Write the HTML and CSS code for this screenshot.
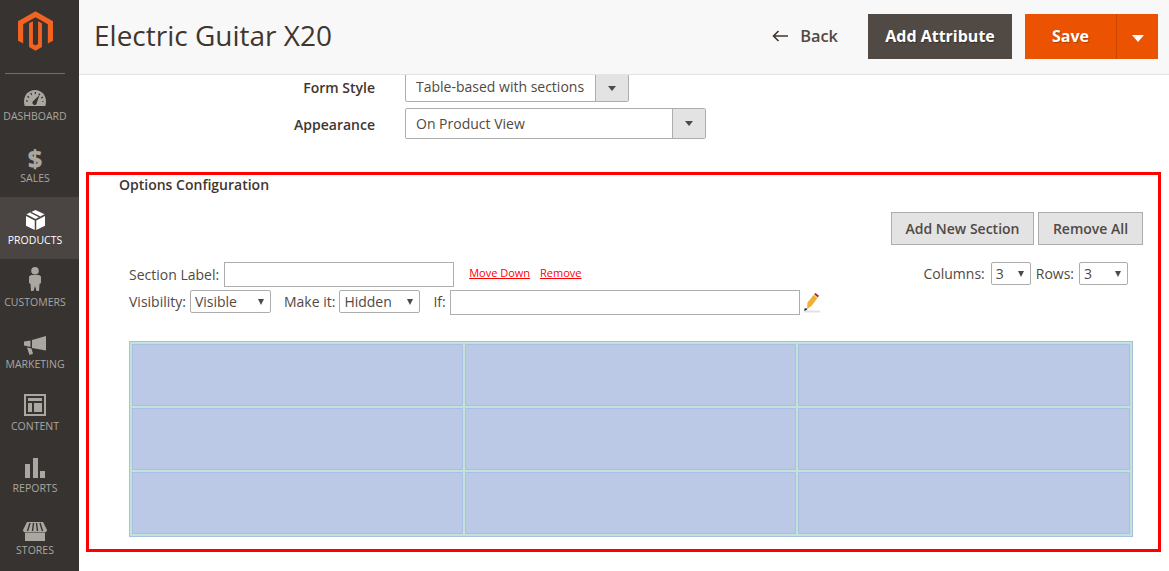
FILE: index.html
```html
<!DOCTYPE html>
<html lang="en">
<head>
<meta charset="utf-8">
<title>Electric Guitar X20</title>
<link rel="stylesheet" href="styles.css">
</head>
<body>
<div class="app">
  <nav class="sidebar">
    <div class="logo">
      <svg width="35" height="40" viewBox="0 0 38 43"><path fill="#f26322" d="M19 0 38 11v21l-5.600 3.200V14.200L19 6.500 5.600 14.200v21L0 32V11z"/><path fill="#f26322" d="M19 43 12 39V13.200l4.200-2.400V35.500l2.800 1.700 2.800-1.700V10.800l4.200 2.400V39z"/></svg>
    </div>
    <a class="nav-item">
      <svg class="nav-icon" width="22" height="16" viewBox="0 0 22 16"><path fill="currentColor" d="M11 0C4.500 0 0 5 0 11.500c0 1.600.2 3.100.7 4.500h20.600c.5-1.400.7-2.900.7-4.500C22 5 17.500 0 11 0z"/><path fill="none" stroke="#373330" stroke-width="2" stroke-dasharray="1.200 3" d="M3 11.500C3 7 6.500 3 11 3s8 4 8 8.500"/><path fill="#373330" d="M15.500 5 12.800 12.800a2.200 2.200 0 1 1-3.500-1.700z"/></svg>
      <span>Dashboard</span>
    </a>
    <a class="nav-item">
      <span class="dollar">$</span>
      <span>Sales</span>
    </a>
    <a class="nav-item active">
      <svg class="nav-icon" width="19" height="20" viewBox="0 0 20 21"><path fill="currentColor" d="M10 0 19.500 4.500 10 9.500.5 4.500z"/><path fill="currentColor" d="M0 6.300 9.200 11v10L0 16.500z"/><path fill="currentColor" d="M20 6.300 10.800 11v10L20 16.500z"/><path stroke="#4a4542" stroke-width="1.500" d="M5 2.500 14.500 7.200"/></svg>
      <span>Products</span>
    </a>
    <a class="nav-item">
      <svg class="nav-icon mb-4" width="12" height="24" viewBox="0 0 12 24"><circle cx="6" cy="3.800" r="3.800" fill="currentColor"/><path fill="currentColor" d="M2 8h8l2 1.500V16l-1.500 1-.5 7H7.500L6 19l-1.500 5H2l-.5-7L0 16V9.500z"/></svg>
      <span>Customers</span>
    </a>
    <a class="nav-item">
      <svg class="nav-icon mb-2" width="22" height="19" viewBox="0 0 22 19"><path fill="currentColor" d="M22 0v14.500L8 12V4z"/><path fill="currentColor" d="M0 5.500 6.500 4.500v6.500L0 9.500z"/><path fill="currentColor" d="M3 11.500 7.500 12.500 9 17.800 5.500 19z"/></svg>
      <span>Marketing</span>
    </a>
    <a class="nav-item">
      <svg class="nav-icon" width="22" height="22" viewBox="0 0 22 22"><path fill="currentColor" fill-rule="evenodd" d="M0 0h22v22H0zM2 2v18h18V2z"/><path fill="currentColor" d="M4 4h14v3H4zM4 9h4v9H4zM10 9h8v9h-8z"/></svg>
      <span>Content</span>
    </a>
    <a class="nav-item">
      <svg class="nav-icon" width="20" height="20" viewBox="0 0 20 20"><path fill="currentColor" d="M0 6h5v14H0zM8 0h5v20H8zM15 13h5v7h-5z"/></svg>
      <span>Reports</span>
    </a>
    <a class="nav-item">
      <svg class="nav-icon mb-2" width="24" height="19" viewBox="0 0 24 19"><path fill="currentColor" d="M4 0h16l4 8c0 1.500-1.200 2.500-2.500 2.500H2.500C1.200 10.500 0 9.500 0 8z"/><path stroke="#373330" stroke-width="1.400" d="M7 1 4.500 9M10.500 1 9.500 9M13.500 1l1 8M17 1l2.500 8"/><path fill="currentColor" d="M2 11h20v8H2z"/></svg>
      <span>Stores</span>
    </a>
  </nav>
  <div class="main">
    <header class="topbar">
      <h1 class="page-title">Electric Guitar X20</h1>
      <div class="actions">
        <a class="back">
          <svg width="16" height="12" viewBox="0 0 16 12"><path fill="none" stroke="#41362f" stroke-width="1.600" d="M16 6H1.500M6.500 1 1.500 6l5 5"/></svg>
          <span>Back</span>
        </a>
        <button class="btn-dark">Add Attribute</button>
        <div class="save">
          <span class="save-label">Save</span>
          <span class="save-toggle"><i class="save-arrow"></i></span>
        </div>
      </div>
    </header>
    <div class="form">
      <div class="field field-cut">
        <label class="field-label">Form Style</label>
        <div class="fake-select w-short"><span class="fake-value">Table-based with sections</span><span class="fake-btn"><i class="tri"></i></span></div>
      </div>
      <div class="field field-tall">
        <label class="field-label">Appearance</label>
        <div class="fake-select w-long tall"><span class="fake-value">On Product View</span><span class="fake-btn"><i class="tri"></i></span></div>
      </div>
    </div>
    <section class="options">
      <h2 class="options-title">Options Configuration</h2>
      <div class="options-buttons">
        <button class="btn-grey add">Add New Section</button>
        <button class="btn-grey">Remove All</button>
      </div>
      <div class="row-one">
        <label class="lbl">Section Label:</label>
        <input class="text-input label-input" type="text">
        <a class="red-link first">Move Down</a>
        <a class="red-link">Remove</a>
        <div class="grid-controls">
          <label class="lbl cols">Columns:</label>
          <select class="mini w-col"><option>3</option></select>
          <label class="lbl">Rows:</label>
          <select class="mini w-row"><option>3</option></select>
        </div>
      </div>
      <div class="row-two">
        <label class="lbl">Visibility:</label>
        <select class="mini w-vis"><option>Visible</option></select>
        <label class="lbl make">Make it:</label>
        <select class="mini w-vis"><option>Hidden</option></select>
        <label class="lbl iflabel">If:</label>
        <input class="text-input if-input" type="text">
        <svg class="pencil" width="17" height="20" viewBox="0 0 17 20"><path fill="#e2e2e2" d="M1 17.500h16v2H1z"/><path fill="#f0b030" d="M4.500 9.500 10.500 2l4 3-6 8-4.500 3z"/><path fill="#a03030" d="M11 1.200 12.500 0l3.500 2.800-1.200 1.700z"/><path fill="#222" d="M1.500 15.500l2-.2.800 1.200-3 1.500z"/></svg>
      </div>
      <div class="sections">
        <div class="cell"></div><div class="cell"></div><div class="cell"></div>
        <div class="cell"></div><div class="cell"></div><div class="cell"></div>
        <div class="cell"></div><div class="cell"></div><div class="cell"></div>
      </div>
    </section>
  </div>
</div>
</body>
</html>
```
FILE: styles.css
```css
* { box-sizing: border-box; }
html, body { margin: 0; padding: 0; height: 100%; overflow: hidden; background: #fff; }
body { font-family: "Open Sans", sans-serif; color: #41362f; font-size: 14px; }
.app { display: flex; height: 571px; }

.sidebar { width: 79px; flex: none; background: #373330; display: flex; flex-direction: column; }
.logo { height: 74px; margin: 0 14px -1px 5px; border-bottom: 1px solid #736e6a; display: flex; justify-content: center; padding-top: 11px; }
.nav-item { height: 62px; flex: none; display: flex; flex-direction: column; align-items: center; justify-content: flex-end; padding: 0 9px 12px 0; color: #aaa6a0; font-size: 10.5px; line-height: 14px; text-transform: uppercase; }
.nav-item.active { background: #4a4542; color: #fff; }
.nav-icon { display: block; margin-bottom: 3px; }
.nav-icon.mb-2 { margin-bottom: 2px; }
.nav-icon.mb-4 { margin-bottom: 4px; }
.dollar { font-size: 25px; line-height: 26px; font-weight: 800; margin-bottom: 0; }

.main { flex: 1; min-width: 0; display: flex; flex-direction: column; }
.topbar { position: relative; z-index: 1; height: 75px; flex: none; background: #f8f8f8; border-bottom: 1px solid #e3e3e3; display: flex; align-items: flex-start; justify-content: space-between; padding: 13px 11px 0 15px; }
.page-title { margin: 0; font-size: 28px; line-height: 44px; font-weight: 400; color: #41362f; }
.actions { display: flex; align-items: center; margin-top: 1px; }
.back { display: flex; align-items: center; gap: 12px; font-size: 16.4px; font-weight: 600; color: #514943; margin-right: 30px; height: 45px; padding-bottom: 2px; }
.btn-dark { width: 144px; height: 45px; background: #514943; color: #fff; border: 0; font: 700 16px "Open Sans", sans-serif; text-shadow: 1px 1px 1px rgba(0,0,0,.3); margin-right: 13px; padding: 0 0 2px; }
.save { width: 133px; height: 45px; display: flex; background: #eb5202; color: #fff; font-weight: 700; font-size: 16px; text-shadow: 1px 1px 1px rgba(0,0,0,.25); }
.save-label { width: 91px; display: flex; align-items: center; justify-content: center; padding-bottom: 2px; }
.save-toggle { flex: 1; border-left: 1px solid #c74400; display: flex; align-items: center; justify-content: center; }
.save-arrow { width: 0; height: 0; margin-top: 3px; border: 6px solid transparent; border-top: 7px solid #fff; border-bottom: 0; }

.form { display: flex; flex-direction: column; gap: 6px; margin-top: -1px; }
.field { display: flex; align-items: center; gap: 30px; }
.field-label { width: 296px; text-align: right; font-size: 14px; font-weight: 600; color: #41362f; }
.field-cut .field-label { margin-bottom: 2px; }
.field-tall .field-label { margin-top: 2px; }
.fake-select { height: 28px; border: 1px solid #adadad; display: flex; align-items: stretch; background: #fff; border-radius: 2px; }
.fake-select.tall { height: 31px; }
.w-short { width: 224px; }
.w-long { width: 301px; }
.fake-value { flex: 1; padding-left: 10px; font-size: 14px; line-height: 24px; color: #514943; }
.tall .fake-value { line-height: 29px; }
.fake-btn { width: 33px; background: #e3e3e3; border-left: 1px solid #adadad; display: flex; align-items: center; justify-content: center; }
.tri { width: 0; height: 0; border: 4px solid transparent; border-top: 5px solid #514943; border-bottom: 0; }

.options { margin: 33px 0 0 7px; width: 1075px; height: 380px; border: 3px solid #f00; padding: 0 15px 0 30px; }
.options-title { margin: 0; font-size: 14px; line-height: 20px; font-weight: 600; color: #41362f; }
.options-buttons { display: flex; justify-content: flex-end; gap: 4px; margin-top: 17px; }
.btn-grey { height: 33px; width: 105px; background: #e3e3e3; border: 1px solid #adadad; font: 600 14px "Open Sans", sans-serif; color: #514943; padding: 0; }
.btn-grey.add { width: 143px; }

.lbl { font-size: 14px; color: #514943; line-height: 20px; }
.text-input { border: 1px solid #adadad; background: #fff; height: 25px; padding: 0; border-radius: 0; }
.label-input { width: 230px; margin-left: 5px; }
.red-link { font-size: 11px; color: #f00; text-decoration: underline; margin: 0 0 4px 10px; }
.red-link.first { margin-left: 15px; }
.row-one { display: flex; align-items: center; margin: 17px 15px 0 10px; height: 25px; }
.grid-controls { margin: 0 0 2px auto; display: flex; align-items: center; gap: 5px; }
.cols { margin-right: 1px; }
.row-two { display: flex; align-items: center; margin: 3px 0 0 10px; height: 25px; }
.row-two .lbl { margin-bottom: 2px; }
.mini { appearance: none; -webkit-appearance: none; height: 23px; border: 1px solid #adadad; border-radius: 2px; color: #514943; font: 14px "Open Sans", sans-serif; padding: 0 0 0 4px; margin-left: 4px; background: #fff url("data:image/svg+xml,%3Csvg xmlns='http://www.w3.org/2000/svg' width='6' height='6'%3E%3Cpath fill='%23514943' d='M0 0h6L3 6z'/%3E%3C/svg%3E") no-repeat right 6px center; }
.row-two .mini { align-self: flex-start; }
.w-col { width: 40px; margin-left: 0; }
.w-row { width: 49px; margin-left: 0; }
.w-vis { width: 81px; }
.make { margin-left: 13px; }
.iflabel { margin-left: 13px; }
.if-input { width: 350px; margin-left: 4px; }
.pencil { margin-left: 3px; }

.sections { margin: 26px 0 0 10px; width: 1004px; height: 196px; background: #c5e2da; border: 1px solid #a6c0e0; padding: 2px; display: grid; grid-template-columns: 331px 331px 332px; grid-template-rows: repeat(3, 62px); gap: 2px; }
.cell { background: #bbc8e6; border: 1px solid #a7c0e4; }
```
